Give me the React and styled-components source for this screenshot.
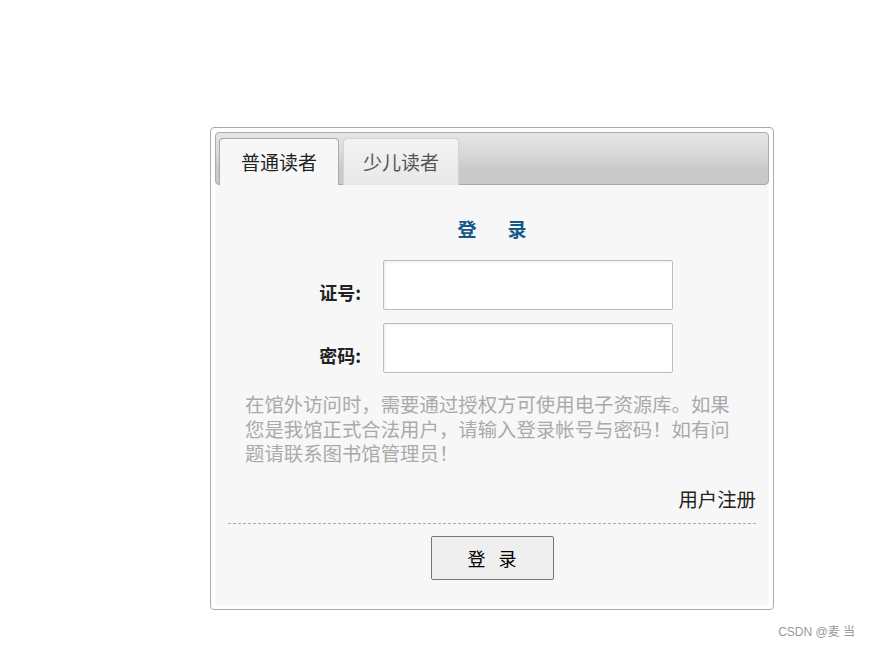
import React from 'react';
import styled, { createGlobalStyle } from 'styled-components';

const GlobalStyle = createGlobalStyle`
  html, body { margin: 0; padding: 0; background: #fff; }
  body { font-family: "Noto Sans CJK SC", "Noto Sans", sans-serif; }
`;

const Page = styled.div`
  position: relative;
  width: 870px;
  height: 647px;
  box-sizing: border-box;
  padding: 127px 0 0 210px;
`;

const Card = styled.div`
  width: 564px;
  box-sizing: border-box;
  border: 1px solid #ababab;
  border-radius: 4px;
  padding: 4px;
  background: #fff;
`;

const TabBar = styled.div`
  display: flex;
  align-items: flex-end;
  gap: 4px;
  padding: 5px 3px 0;
  border: 1px solid #aaa;
  border-radius: 4px;
  background: linear-gradient(to bottom, #e5e5e5 0%, #dadada 35%, #cacaca 70%, #c8c8c8 100%);
`;

const Tab = styled.div`
  height: 46px;
  margin-bottom: -1px;
  padding: 0 ${p => (p.$active ? '21px' : '19px')};
  display: flex;
  align-items: center;
  border: 1px solid ${p => (p.$active ? '#aaa' : '#d3d3d3')};
  border-bottom: none;
  border-radius: 4px 4px 0 0;
  background: ${p => (p.$active ? '#f7f7f7' : 'linear-gradient(to bottom, #f3f3f3, #e8e8e8)')};
  color: ${p => (p.$active ? '#222' : '#555')};
  font-size: 19px;
  line-height: 24px;
  cursor: pointer;
`;

const Panel = styled.div`
  background: #f7f7f7;
  border-radius: 0 0 4px 4px;
  padding: 32px 13px 25px;
  display: flex;
  flex-direction: column;
`;

const Title = styled.div`
  display: flex;
  justify-content: center;
  gap: 31px;
  font-size: 19px;
  line-height: 24px;
  font-weight: bold;
  color: #15598a;
`;

const Form = styled.div`
  margin-top: 19px;
  display: grid;
  grid-template-columns: 133px 290px;
  column-gap: 22px;
  row-gap: 13px;
`;

const Label = styled.label`
  align-self: end;
  margin-bottom: 8px;
  text-align: right;
  font-size: 18px;
  line-height: 20px;
  font-weight: bold;
  color: #222;
`;

const Input = styled.input`
  box-sizing: border-box;
  width: 290px;
  height: 50px;
  border: 1px solid #bdbdbd;
  border-radius: 2px;
  background: #fff;
  box-shadow: inset 1px 1px 3px rgba(0, 0, 0, 0.08);
  padding: 0 8px;
  font-size: 16px;
  outline: none;
`;

const Notice = styled.p`
  margin: 19px 0 0 17px;
  width: 490px;
  font-size: 19.4px;
  line-height: 24.5px;
  color: #aaa;
`;

const RegisterRow = styled.div`
  margin-top: 21px;
  padding-bottom: 12px;
  border-bottom: 1px dashed #aaa;
  text-align: right;
  font-size: 19.4px;
  line-height: 24px;
  color: #222;
`;

const RegisterLink = styled.a`
  color: inherit;
  text-decoration: none;
  cursor: pointer;
`;

const ButtonRow = styled.div`
  margin-top: 12px;
  display: flex;
  justify-content: center;
`;

const SubmitButton = styled.button`
  box-sizing: border-box;
  width: 123px;
  height: 44px;
  display: flex;
  align-items: center;
  justify-content: center;
  gap: 13px;
  background: #efefef;
  border: 1px solid #767676;
  border-radius: 2px;
  font-family: "Noto Sans CJK SC", sans-serif;
  font-size: 18px;
  color: #000;
  cursor: pointer;
  padding: 0;
`;

const Watermark = styled.div`
  position: absolute;
  right: 15px;
  top: 623px;
  font-family: "Liberation Sans", "Noto Sans CJK SC", sans-serif;
  font-size: 12px;
  line-height: 18px;
  color: #9a9a9a;
`;

export default function App() {
  return (
    <Page>
      <GlobalStyle />
      <Card>
        <TabBar>
          <Tab $active>普通读者</Tab>
          <Tab>少儿读者</Tab>
        </TabBar>
        <Panel>
          <Title>
            <span>登</span>
            <span>录</span>
          </Title>
          <Form>
            <Label htmlFor="card">证号:</Label>
            <Input id="card" type="text" />
            <Label htmlFor="pwd">密码:</Label>
            <Input id="pwd" type="password" />
          </Form>
          <Notice>
            在馆外访问时，需要通过授权方可使用电子资源库。如果您是我馆正式合法用户，请输入登录帐号与密码！如有问题请联系图书馆管理员！
          </Notice>
          <RegisterRow>
            <RegisterLink>用户注册</RegisterLink>
          </RegisterRow>
          <ButtonRow>
            <SubmitButton type="button">
              <span>登</span>
              <span>录</span>
            </SubmitButton>
          </ButtonRow>
        </Panel>
      </Card>
      <Watermark>CSDN @麦 当</Watermark>
    </Page>
  );
}
